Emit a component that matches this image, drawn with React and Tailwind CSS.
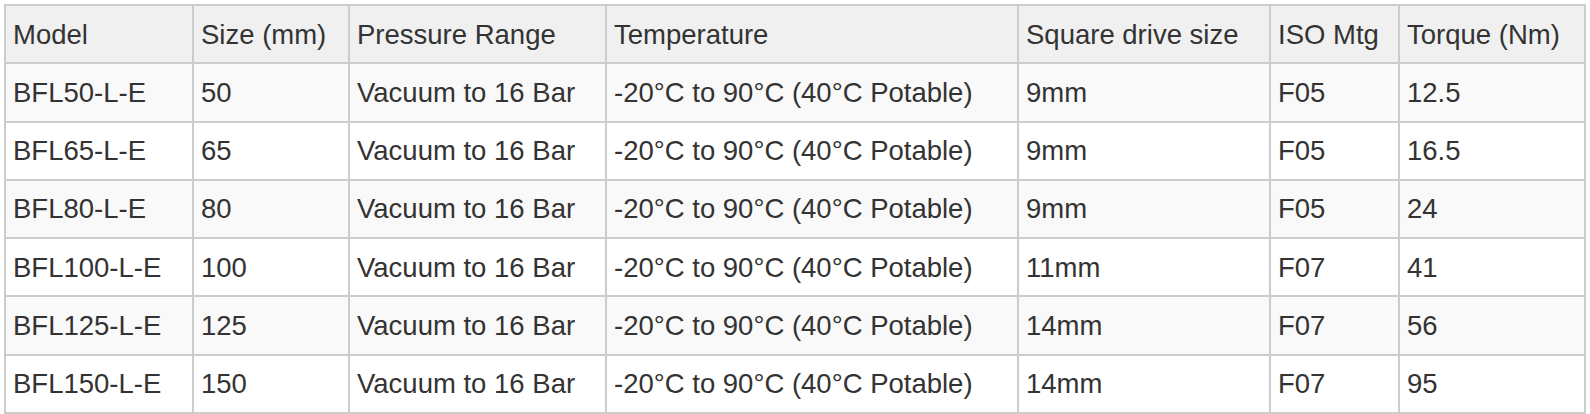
const columns = ['Model', 'Size (mm)', 'Pressure Range', 'Temperature', 'Square drive size', 'ISO Mtg', 'Torque (Nm)'];
const widths = [188, 156, 257, 412, 252, 129, 186];

const rows = [
  ['BFL50-L-E', '50', 'Vacuum to 16 Bar', '-20°C to 90°C (40°C Potable)', '9mm', 'F05', '12.5'],
  ['BFL65-L-E', '65', 'Vacuum to 16 Bar', '-20°C to 90°C (40°C Potable)', '9mm', 'F05', '16.5'],
  ['BFL80-L-E', '80', 'Vacuum to 16 Bar', '-20°C to 90°C (40°C Potable)', '9mm', 'F05', '24'],
  ['BFL100-L-E', '100', 'Vacuum to 16 Bar', '-20°C to 90°C (40°C Potable)', '11mm', 'F07', '41'],
  ['BFL125-L-E', '125', 'Vacuum to 16 Bar', '-20°C to 90°C (40°C Potable)', '14mm', 'F07', '56'],
  ['BFL150-L-E', '150', 'Vacuum to 16 Bar', '-20°C to 90°C (40°C Potable)', '14mm', 'F07', '95'],
];

const App = () => {
  return (
    <div className="bg-white p-1" style={{ fontFamily: '"Liberation Sans", Arial, sans-serif' }}>
      <table className="table-fixed border-collapse w-[1582px] border-2 border-[#cccccc] text-[27.5px] text-[#333333]">
        <colgroup>
          {widths.map((w, i) => (
            <col key={i} style={{ width: w }} />
          ))}
        </colgroup>
        <thead>
          <tr className="bg-[#f0f0f0] h-[58.3px]">
            {columns.map((c) => (
              <th key={c} className="border-2 border-[#cccccc] px-[7px] py-0 text-left font-normal align-middle whitespace-nowrap">
                {c}
              </th>
            ))}
          </tr>
        </thead>
        <tbody>
          {rows.map((row, i) => (
            <tr key={row[0]} className={i % 2 === 0 ? 'bg-[#f9f9f9] h-[58.3px]' : 'bg-white h-[58.3px]'}>
              {row.map((cell, j) => (
                <td key={j} className="border-2 border-[#cccccc] px-[7px] py-0 align-middle whitespace-nowrap">
                  {cell}
                </td>
              ))}
            </tr>
          ))}
        </tbody>
      </table>
    </div>
  );
};

export default App;
